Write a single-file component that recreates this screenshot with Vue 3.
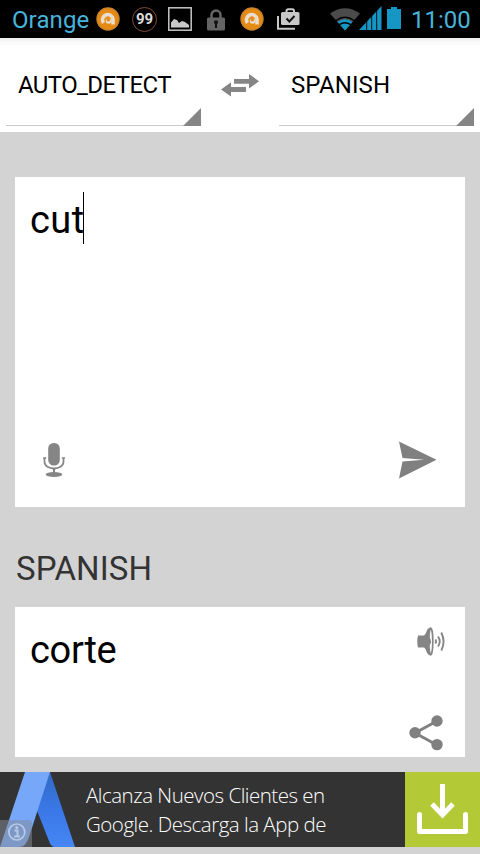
<script setup>
import { ref } from 'vue'

const carrier = ref('Orange')
const clock = ref('11:00')
const source = ref('AUTO_DETECT')
const target = ref('SPANISH')
const input = ref('cut')
const output = ref('corte')
</script>

<template>
  <div class="screen">
    <header class="status">
      <span class="carrier">{{ carrier }}</span>
      <svg class="i-avast" width="24" height="24" viewBox="0 0 24 24">
        <circle cx="12" cy="12" r="11.700" fill="#c9842a" />
        <circle cx="12" cy="12" r="10.300" fill="#e58a12" />
        <path d="M7.500 16A5.300 5.300 0 1 1 17 12v5.500" fill="none" stroke="#eadfce" stroke-width="3.600" />
        <circle cx="12.500" cy="14" r="2.800" fill="#eadfce" />
        <circle cx="12.300" cy="12.700" r="1.800" fill="#e58a12" />
      </svg>
      <span class="badge">99</span>
      <svg class="i-pic" width="24" height="24" viewBox="0 0 24 24">
        <rect x=".8" y=".8" width="22.400" height="22.400" fill="none" stroke="#c6c6c6" stroke-width="1.500" />
        <path d="M3 20.500v-5l3-3.500 3 1 2 3 3-2 3 1 4 3v2.500z" fill="#c9c9c9" />
      </svg>
      <svg class="i-lock" width="18" height="22" viewBox="0 0 18 22">
        <path d="M4.500 10V6a4.500 4.500 0 0 1 9 0v4" fill="none" stroke="#686868" stroke-width="2.400" />
        <rect y="8.500" width="18" height="13" rx="1.500" fill="#646464" />
        <circle cx="9" cy="13.300" r="2" fill="#111" /><path d="M8 14h2v5H8z" fill="#111" />
      </svg>
      <svg class="i-avast2" width="24" height="24" viewBox="0 0 24 24">
        <circle cx="12" cy="12" r="11.700" fill="#c9842a" />
        <circle cx="12" cy="12" r="10.300" fill="#e58a12" />
        <path d="M7.500 16A5.300 5.300 0 1 1 17 12v5.500" fill="none" stroke="#eadfce" stroke-width="3.600" />
        <circle cx="12.500" cy="14" r="2.800" fill="#eadfce" />
        <circle cx="12.300" cy="12.700" r="1.800" fill="#e58a12" />
      </svg>
      <svg class="i-bag" width="23" height="22" viewBox="0 0 23 22">
        <path d="M1 8v12.800h17" fill="none" stroke="#c8c8c8" stroke-width="2" />
        <path d="M9.500 5V3q0-1.800 1.800-1.800h4Q17 1.200 17 3v2" fill="none" stroke="#c8c8c8" stroke-width="2" />
        <rect x="4" y="4" width="18.500" height="13" rx="1.500" fill="#c8c8c8" />
        <path d="M9.500 10.500l2.800 3L17.500 8" fill="none" stroke="#111" stroke-width="1.900" />
      </svg>
      <svg class="i-wifi" width="30" height="23" viewBox="0 0 30 23">
        <path d="M15 22.500L0 5.500Q15-5 30 5.500z" fill="#4b4b4b" />
        <path d="M15 22.500L7.500 14Q15 8.500 22.500 14z" fill="#1596c4" />
        <path d="M6 12.500Q15 6 24 12.500M9.300 16.600Q15 13 20.700 16.600" fill="none" stroke="#000" stroke-width="1.500" />
      </svg>
      <svg class="i-signal" width="23" height="24" viewBox="0 0 23 24">
        <path d="M0 24L22.500 0v24z" fill="#1596c4" />
        <path d="M7.700 10v14M12.700 5v19M17.700 0v24" stroke="#000" stroke-width=".9" />
      </svg>
      <svg class="i-batt" width="14" height="22" viewBox="0 0 14 22">
        <path d="M4 0h6v2h4v20H0V2h4z" fill="#1596c4" />
      </svg>
      <span class="clock">{{ clock }}</span>
    </header>

    <nav class="languages">
      <div class="spinner"><span class="label tight">{{ source }}</span></div>
      <svg class="swap" width="38" height="23" viewBox="0 0 38 23">
        <path d="M13 5h15V0l10 7.300L28 14.500V9.700H13zM25 13H10V8.200L0 15.500l10 7V18h15z" fill="#858585" />
      </svg>
      <div class="spinner"><span class="label">{{ target }}</span></div>
    </nav>

    <main class="content">
      <section class="card source">
        <div class="text entry"><span>{{ input }}</span><i class="caret"></i></div>
        <div class="tools">
          <svg width="22" height="35" viewBox="0 0 22 35">
            <rect x="5.200" y="0" width="11.600" height="22.500" rx="5.500" fill="#858585" />
            <path d="M1.500 15.200v3.500c0 9 19 9 19 0v-3.500" fill="none" stroke="#858585" stroke-width="1.700" />
            <path d="M0 15h3.200M18.800 15H22" stroke="#858585" stroke-width="1.500" />
            <path d="M8.500 25h5l-1.500 2v3h-2v-3z" fill="#858585" />
            <ellipse cx="11" cy="31.500" rx="8.300" ry="2.500" fill="#858585" />
          </svg>
          <svg width="38" height="38" viewBox="0 0 38 38">
            <path d="M0 .5L37.500 18.800 0 37.500 3.500 20.500 25 18.800 3.500 17z" fill="#808080" />
          </svg>
        </div>
      </section>

      <h2 class="heading">{{ target }}</h2>

      <section class="card result">
        <div class="text">{{ output }}</div>
        <div class="actions">
          <svg class="speaker" width="28" height="29" viewBox="0 0 28 29">
            <path d="M1 8.500h6C9.500 7 9.500 1 13.300.5v28C9.500 28 9.500 22 7 20.500H1Q-.5 14.500 1 8.500z" fill="#858585" />
            <ellipse cx="13.800" cy="14.500" rx="2" ry="13.300" fill="#fff" stroke="#858585" stroke-width="1.700" />
            <path d="M11.500 9.500q5 5 0 10z" fill="#858585" />
            <path d="M18.300 12.500q1.500 2 0 4M21 9.500q3.500 5 0 10M24.300 5.500q4.500 9 0 18" fill="none" stroke="#858585" stroke-width="1.900" />
          </svg>
          <svg class="share" width="34" height="36" viewBox="0 0 34 36">
            <path d="M28 6L6 18l22 12" fill="none" stroke="#808080" stroke-width="2.900" />
            <g fill="#808080"><circle cx="28" cy="6" r="5.700" /><circle cx="6" cy="17.800" r="5.700" /><circle cx="28" cy="29.600" r="5.700" /></g>
          </svg>
        </div>
      </section>
    </main>

    <aside class="ad">
      <svg class="brand" width="75" height="75" viewBox="0 0 75 75">
        <defs>
          <linearGradient id="blade" x1="0" y1="0" x2="0" y2="1">
            <stop offset="0" stop-color="#3269c4" /><stop offset=".5" stop-color="#3978e6" /><stop offset="1" stop-color="#4687f5" />
          </linearGradient>
        </defs>
        <path d="M49 0h1l25 75H55q-4 0-6-6L36 36z" fill="url(#blade)" />
        <path d="M25 0h25L29 65q-3 10-10 10H0z" fill="#76a7f8" />
        <path d="M0 48h28q4 0 4 4v23H0z" fill="#858b95" opacity=".52" />
        <circle cx="16.800" cy="60" r="8" fill="none" stroke="#b7cae8" stroke-width="1.700" />
        <path d="M14.500 58.500h3v5.500M14 64.500h6" fill="none" stroke="#b7cae8" stroke-width="2" />
        <circle cx="16.800" cy="55.500" r="1.500" fill="#b7cae8" />
      </svg>
      <p class="copy"><span>Alcanza Nuevos Clientes en</span><span>Google. Descarga la App de</span></p>
      <div class="download">
        <svg width="51" height="51" viewBox="0 0 51 51">
          <path d="M2.500 30.500v17h46v-17" fill="none" stroke="#fff" stroke-width="5" stroke-linecap="round" stroke-linejoin="round" />
          <path d="M25.500 0v31M15 20l10.500 11L36 20" fill="none" stroke="#fff" stroke-width="5" />
        </svg>
      </div>
    </aside>
  </div>
</template>

<style>
body { background: #d3d3d3; }
</style>

<style scoped>
.screen {
  width: 480px;
  height: 854px;
  display: flex;
  flex-direction: column;
  overflow: hidden;
  background: #d3d3d3;
  font-family: Roboto, "Liberation Sans", sans-serif;
  color: #000;
}
svg { display: block; flex: none; }
.status {
  flex: none;
  height: 38px;
  background: #000;
  display: flex;
  align-items: center;
  padding-left: 12px;
  color: #48b4dc;
  white-space: nowrap;
}
.carrier { width: 84px; font-size: 24px; line-height: 38px; letter-spacing: 0.1px; padding-top: 1px; box-sizing: border-box; height: 38px; }
.badge {
  box-sizing: border-box;
  width: 25px;
  height: 25px;
  margin-left: 12px;
  border: 1.500px solid #804a3c;
  border-radius: 50%;
  color: #ddd;
  font-size: 15px;
  font-weight: 700;
  line-height: 23px;
  text-align: center;
}
.i-pic { margin-left: 11px; }
.i-lock { margin-left: 15px; margin-top: 1px; }
.i-avast2 { margin-left: 15px; }
.i-bag { margin-left: 13px; }
.i-wifi { margin-left: 30px; }
.i-signal { margin-left: -1px; margin-top: -2px; }
.i-batt { margin-left: 5px; margin-top: -2px; }
.clock { margin-left: 10px; font-size: 24px; line-height: 38px; height: 38px; padding-top: 1px; box-sizing: border-box; }
.languages {
  flex: none;
  box-sizing: border-box;
  height: 94px;
  padding: 0 6px 6px;
  display: flex;
  justify-content: space-between;
  background: linear-gradient(#eaeaea, #fafafa 4px, #fff 9px);
}
.spinner {
  position: relative;
  box-sizing: border-box;
  width: 195px;
  border-bottom: 1px solid #c9c9c9;
  padding: 33px 30px 0 12px;
}
.spinner::after {
  content: "";
  position: absolute;
  right: 0;
  bottom: -1px;
  width: 18px;
  height: 18px;
  background: #858585;
  clip-path: polygon(100% 0, 100% 100%, 0 100%);
}
.label { display: block; white-space: nowrap; font-size: 24px; line-height: 28px; letter-spacing: 0.1px; }
.label.tight { letter-spacing: -0.6px; }
.swap { margin-top: 36px; }
.content { flex: none; padding: 45px 15px 15px; }
.card { box-sizing: border-box; background: #fff; display: flex; padding: 15px; }
.source { height: 330px; flex-direction: column; justify-content: space-between; padding-bottom: 28px; }
.text { display: flex; font-size: 38px; line-height: 52px; letter-spacing: -0.3px; }
.entry { height: 52px; letter-spacing: 0.4px; }
.entry span { padding-top: 2px; }
.caret { width: 1px; height: 52px; background: #000; margin-left: -1px; }
.tools { display: flex; justify-content: space-between; align-items: center; padding: 0 13px; }
.heading { margin: 37px 0 13px 1px; height: 50px; line-height: 50px; font-size: 33px; font-weight: 400; letter-spacing: 0.1px; color: #333; }
.result { height: 150px; justify-content: space-between; padding: 17px 20px 6px 15px; }
.actions { display: flex; flex-direction: column; justify-content: space-between; align-items: flex-end; }
.share { margin-right: 2px; }
.speaker { margin-top: 3px; }
.ad { flex: none; display: flex; height: 75px; background: #333; }
.copy {
  margin: 0;
  width: 330px;
  box-sizing: border-box;
  padding: 9px 0 0 11px;
  font: 300 20.500px/29px "Open Sans", "Noto Sans", sans-serif;
  letter-spacing: -0.49px;
  color: #fff;
  white-space: nowrap;
}
.copy span { display: block; }
.download { width: 75px; background: #b3ca36; display: flex; justify-content: center; align-items: center; }
</style>
